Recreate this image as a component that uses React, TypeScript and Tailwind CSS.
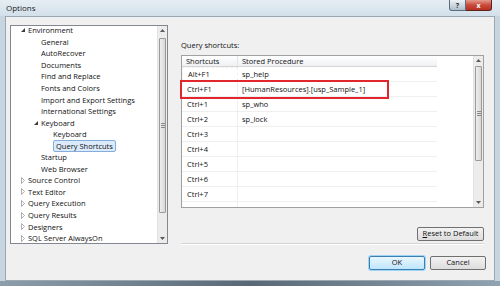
import React from 'react';

const font = { fontFamily: '"Open Sans", "Noto Sans", sans-serif' };

type Node = { label: string; level: number; arrow?: 'open' | 'closed'; selected?: boolean };

const tree: Node[] = [
  { label: 'Environment', level: 0, arrow: 'open' },
  { label: 'General', level: 1 },
  { label: 'AutoRecover', level: 1 },
  { label: 'Documents', level: 1 },
  { label: 'Find and Replace', level: 1 },
  { label: 'Fonts and Colors', level: 1 },
  { label: 'Import and Export Settings', level: 1 },
  { label: 'International Settings', level: 1 },
  { label: 'Keyboard', level: 1, arrow: 'open' },
  { label: 'Keyboard', level: 2 },
  { label: 'Query Shortcuts', level: 2, selected: true },
  { label: 'Startup', level: 1 },
  { label: 'Web Browser', level: 1 },
  { label: 'Source Control', level: 0, arrow: 'closed' },
  { label: 'Text Editor', level: 0, arrow: 'closed' },
  { label: 'Query Execution', level: 0, arrow: 'closed' },
  { label: 'Query Results', level: 0, arrow: 'closed' },
  { label: 'Designers', level: 0, arrow: 'closed' },
  { label: 'SQL Server AlwaysOn', level: 0, arrow: 'closed' },
];

const rows = [
  ['Alt+F1', 'sp_help'],
  ['Ctrl+F1', '[HumanResources].[usp_Sample_1]'],
  ['Ctrl+1', 'sp_who'],
  ['Ctrl+2', 'sp_lock'],
  ['Ctrl+3', ''],
  ['Ctrl+4', ''],
  ['Ctrl+5', ''],
  ['Ctrl+6', ''],
  ['Ctrl+7', ''],
  ['', ''],
];

const Arrow: React.FC<{ kind: 'open' | 'closed' }> = ({ kind }) =>
  kind === 'open' ? (
    <svg width="6" height="6" viewBox="0 0 6 6">
      <polygon points="5,1 5,5 1,5" fill="#3c3c3c" />
    </svg>
  ) : (
    <svg width="6" height="7" viewBox="0 0 6 7">
      <polygon points="1.5,0.5 4.5,3.5 1.5,6.5" fill="none" stroke="#9a9a9a" strokeWidth="0.8" />
    </svg>
  );

const ScrollBar: React.FC<{ thumbTop: number; thumbHeight: number }> = ({ thumbTop, thumbHeight }) => (
  <div className="w-[10px] h-full bg-[#ececec] border-l border-[#e2e2e2] flex flex-col">
    <div className="h-[9px] flex items-center justify-center">
      <svg width="5" height="3" viewBox="0 0 5 3"><polygon points="0,3 2.5,0 5,3" fill="#5a5a5a" /></svg>
    </div>
    <div className="flex-1 relative">
      <div
        className="absolute left-[1px] right-[1px] rounded-[1px] border border-[#9a9a9a] bg-gradient-to-r from-[#eeeeee] to-[#d8d8d8] flex items-center justify-center"
        style={{ top: thumbTop, height: thumbHeight }}
      >
        <div className="flex flex-col gap-[1px]">
          <div className="w-[4px] h-px bg-[#8a8a8a]" />
          <div className="w-[4px] h-px bg-[#8a8a8a]" />
          <div className="w-[4px] h-px bg-[#8a8a8a]" />
        </div>
      </div>
    </div>
    <div className="h-[9px] flex items-center justify-center">
      <svg width="5" height="3" viewBox="0 0 5 3"><polygon points="0,0 2.5,3 5,0" fill="#5a5a5a" /></svg>
    </div>
  </div>
);

const Button: React.FC<{ label: React.ReactNode; w: string; primary?: boolean }> = ({ label, w, primary }) => (
  <div
    className={`${w} h-[14px] rounded-[2px] border flex items-center justify-center text-[7.5px] text-[#111] ${
      primary
        ? 'border-[#3c7fb1] bg-gradient-to-b from-[#eaf6fd] to-[#bee6fd] shadow-[0_0_0_1px_#9fd3f3]'
        : 'border-[#707070] bg-gradient-to-b from-[#f2f2f2] to-[#dddddd]'
    }`}
  >
    {label}
  </div>
);

export default function App() {
  return (
    <div className="w-[500px] h-[286px] flex flex-col bg-[#c6d5e0] overflow-hidden" style={font}>
      {/* Title bar */}
      <div className="h-[16px] flex items-start bg-gradient-to-b from-[#e6eef4] to-[#d3e0ea]">
        <span className="pl-[6px] pt-[3px] text-[8px] leading-[10px] text-[#1a1a1a]">Options</span>
        <div className="ml-auto mr-[8px] flex">
          <div className="w-[17px] h-[11px] rounded-bl-[3px] border border-t-0 border-[#5d6d7a] bg-gradient-to-b from-[#eef3f7] to-[#aebfcd] flex items-center justify-center text-[7px] leading-none text-[#2a2a2a] font-bold">
            ?
          </div>
          <div className="w-[26px] h-[11px] rounded-br-[3px] border border-t-0 border-l-0 border-[#5a2520] bg-gradient-to-b from-[#e49a8c] via-[#c94a3c] to-[#b8301f] flex items-center justify-center text-[7px] leading-none text-white font-bold">
            x
          </div>
        </div>
      </div>

      {/* Client */}
      <div className="mx-[5px] h-[265px] bg-[#f0f0f0] border border-[#9aa8b4] flex flex-col">
        <div className="flex pt-[8px] pl-[4px] pr-[10px]">
          {/* Tree */}
          <div className="w-[158px] h-[219px] bg-white border border-[#828790] flex overflow-hidden">
            <div className="flex-1 mt-[-1.5px]">
              {tree.map((n, i) => (
                <div key={i} className="h-[11.55px] flex items-center">
                  <div
                    className={`w-[7px] flex justify-center ${n.level === 0 ? 'ml-[8px]' : n.level === 1 ? 'ml-[21px]' : 'ml-[33px]'}`}
                  >
                    {n.arrow && <Arrow kind={n.arrow} />}
                  </div>
                  <span
                    className={`ml-[2px] text-[7.5px] leading-[10px] text-[#111] whitespace-nowrap ${
                      n.selected ? 'px-[2px] ml-[1px] rounded-[2px] border border-[#84acdd] bg-[#dcebfc]' : ''
                    }`}
                  >
                    {n.label}
                  </span>
                </div>
              ))}
            </div>
            <ScrollBar thumbTop={3} thumbHeight={175} />
          </div>

          {/* Right panel */}
          <div className="ml-[13px] flex-1 flex flex-col">
            <div className="mt-[15px] h-[10px] text-[7.5px] leading-[10px] text-[#111]">Query shortcuts:</div>
            <div className="mt-[5px] h-[153px] bg-white border border-[#a0a0a0] flex relative">
              <div className="flex-1 flex flex-col overflow-hidden">
                <div className="w-[255px] h-[12px] flex border-b border-[#d5d5d5] bg-gradient-to-b from-[#ffffff] to-[#eef0f3] text-[7.5px] leading-[10px] text-[#111]">
                  <div className="w-[56px] pl-[4px] flex items-center border-r border-[#e3e3e3]">Shortcuts</div>
                  <div className="flex-1 pl-[4px] flex items-center">Stored Procedure</div>
                </div>
                {rows.map((r, i) => (
                  <div key={i} className="w-[255px] h-[15px] shrink-0 flex border-b border-[#efefef] text-[7.5px] leading-[10px] text-[#111]">
                    <div
                      className={`w-[56px] pl-[5px] flex items-center border-r border-[#efefef] ${
                        i === 0 ? 'border border-dashed border-[#8a8a8a] pl-[4px]' : ''
                      }`}
                    >
                      {r[0]}
                    </div>
                    <div className="flex-1 pl-[4px] flex items-center">{r[1]}</div>
                  </div>
                ))}
              </div>
              <ScrollBar thumbTop={1} thumbHeight={95} />
              {/* highlight */}
              <div className="absolute left-[-2px] top-[24px] w-[209px] h-[19px] border-2 border-[#e3262c]" />
            </div>
            <div className="mt-[19px] flex justify-end">
              <Button w="w-[67px]" label={<span><span className="underline">R</span>eset to Default</span>} />
            </div>
            <div className="mt-[2px] h-[2px] border-t border-[#d5d5d5] border-b border-b-white" />
          </div>
        </div>

        <div className="mt-[11px] flex justify-end gap-[5px] pr-[8px]">
          <Button w="w-[56px]" label="OK" primary />
          <Button w="w-[56px]" label="Cancel" />
        </div>
      </div>

      {/* Bottom frame */}
      <div className="flex-1 mx-0 bg-gradient-to-r from-[#8d9eab] via-[#5a6876] to-[#8fa3b3]" />
    </div>
  );
}
